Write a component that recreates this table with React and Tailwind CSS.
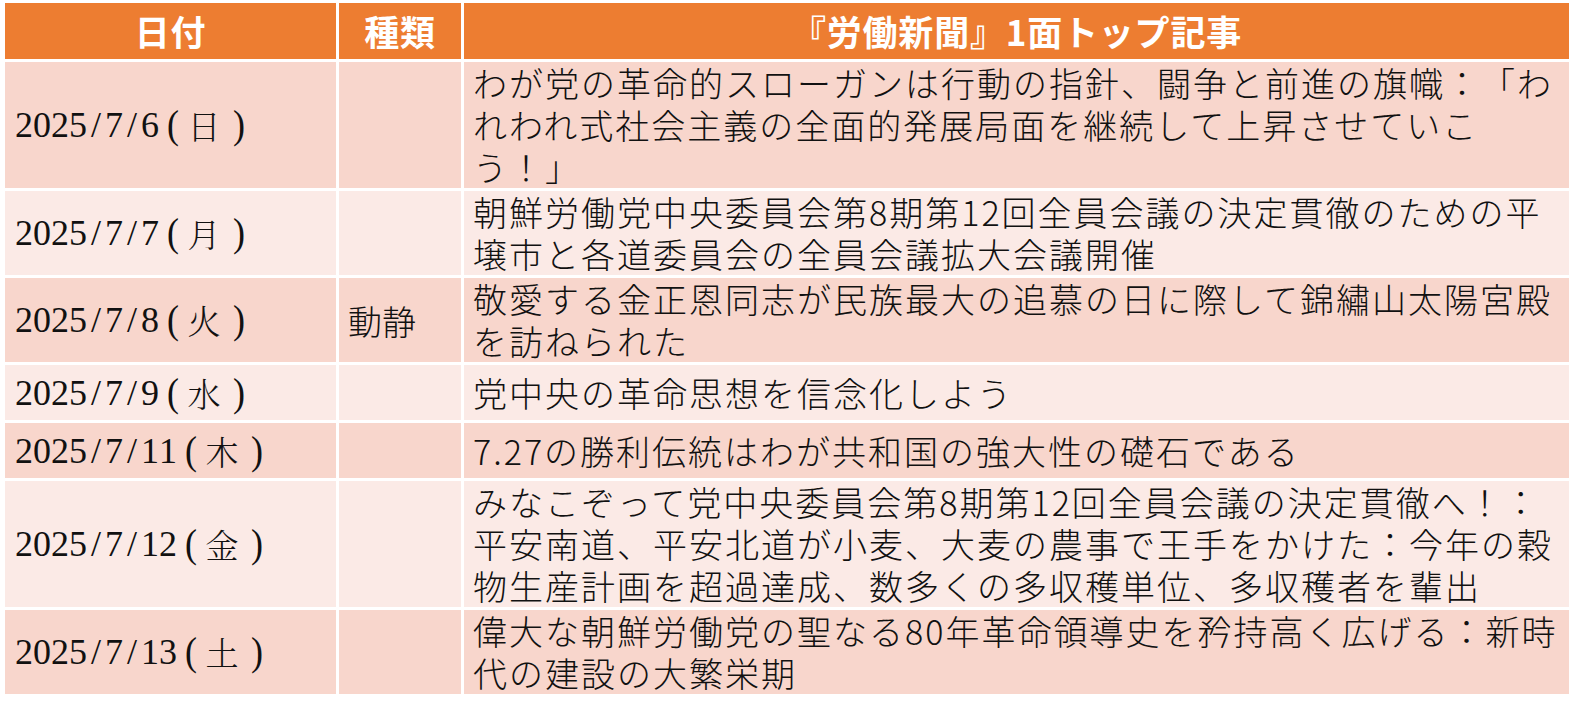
import React from "react";

const rows = [
  { date: "2025/7/6", day: "日", kind: "", lines: ["わが党の革命的スローガンは行動の指針、闘争と前進の旗幟：「わ", "れわれ式社会主義の全面的発展局面を継続して上昇させていこ", "う！」"] },
  { date: "2025/7/7", day: "月", kind: "", lines: ["朝鮮労働党中央委員会第8期第12回全員会議の決定貫徹のための平", "壌市と各道委員会の全員会議拡大会議開催"] },
  { date: "2025/7/8", day: "火", kind: "動静", lines: ["敬愛する金正恩同志が民族最大の追慕の日に際して錦繡山太陽宮殿", "を訪ねられた"] },
  { date: "2025/7/9", day: "水", kind: "", lines: ["党中央の革命思想を信念化しよう"] },
  { date: "2025/7/11", day: "木", kind: "", lines: ["7.27の勝利伝統はわが共和国の強大性の礎石である"] },
  { date: "2025/7/12", day: "金", kind: "", lines: ["みなこぞって党中央委員会第8期第12回全員会議の決定貫徹へ！：", "平安南道、平安北道が小麦、大麦の農事で王手をかけた：今年の穀", "物生産計画を超過達成、数多くの多収穫単位、多収穫者を輩出"] },
  { date: "2025/7/13", day: "土", kind: "", lines: ["偉大な朝鮮労働党の聖なる80年革命領導史を矜持高く広げる：新時", "代の建設の大繁栄期"] },
];

function HeaderCell({ children }) {
  return (
    <div className="h-[56px] bg-[#ED7D31] flex items-center justify-center text-white font-bold text-[35px] tracking-[0.8px] font-[family-name:'Noto_Sans_CJK_JP','Noto_Sans',sans-serif]">
      {children}
    </div>
  );
}

function DateText({ date, day }) {
  return (
    <div className="flex items-center text-[36px] font-normal text-[#111] whitespace-nowrap font-[family-name:'Liberation_Serif',serif]">
      {date.split("").map((c, k) => (
        <span key={k} className="inline-block w-[18px] text-center">{c}</span>
      ))}
      <span className="inline-block ml-[8px] scale-y-[1.12]">(</span>
      <span className="inline-block w-[34px] ml-[8px] text-center text-[33px] font-light font-[family-name:'Noto_Serif_CJK_JP','Noto_Sans_CJK_JP',serif]">{day}</span>
      <span className="inline-block ml-[12px] scale-y-[1.12]">)</span>
    </div>
  );
}

export default function App() {
  return (
    <div className="w-[1576px] h-[705px] bg-white pt-[3px] pl-[5px]">
      <div className="grid grid-cols-[331px_122px_1105px] gap-[3px] bg-white">
        <HeaderCell>日付</HeaderCell>
        <HeaderCell>種類</HeaderCell>
        <HeaderCell>『労働新聞』1面トップ記事</HeaderCell>
        {rows.map((r, i) => {
          const bg = i % 2 === 0 ? "bg-[#F8D6CC]" : "bg-[#FBEAE6]";
          return (
            <React.Fragment key={i}>
              <div className={`${bg} min-h-[55px] flex items-center pl-[10px]`}>
                <DateText date={r.date} day={r.day} />
              </div>
              <div className={`${bg} min-h-[55px] flex items-center pl-[9px] text-[34px] font-light text-[#111] font-[family-name:'Noto_Sans_CJK_JP','Noto_Sans',sans-serif]`}>
                {r.kind}
              </div>
              <div className={`${bg} min-h-[55px] flex flex-col justify-center pl-[9px] text-[34px] font-light leading-[42px] tracking-[2px] [text-spacing-trim:space-all] text-[#111] font-[family-name:'Noto_Sans_CJK_JP','Noto_Sans',sans-serif]`}>
                {r.lines.map((l, j) => (
                  <div key={j} className="whitespace-nowrap">{l}</div>
                ))}
              </div>
            </React.Fragment>
          );
        })}
      </div>
    </div>
  );
}
